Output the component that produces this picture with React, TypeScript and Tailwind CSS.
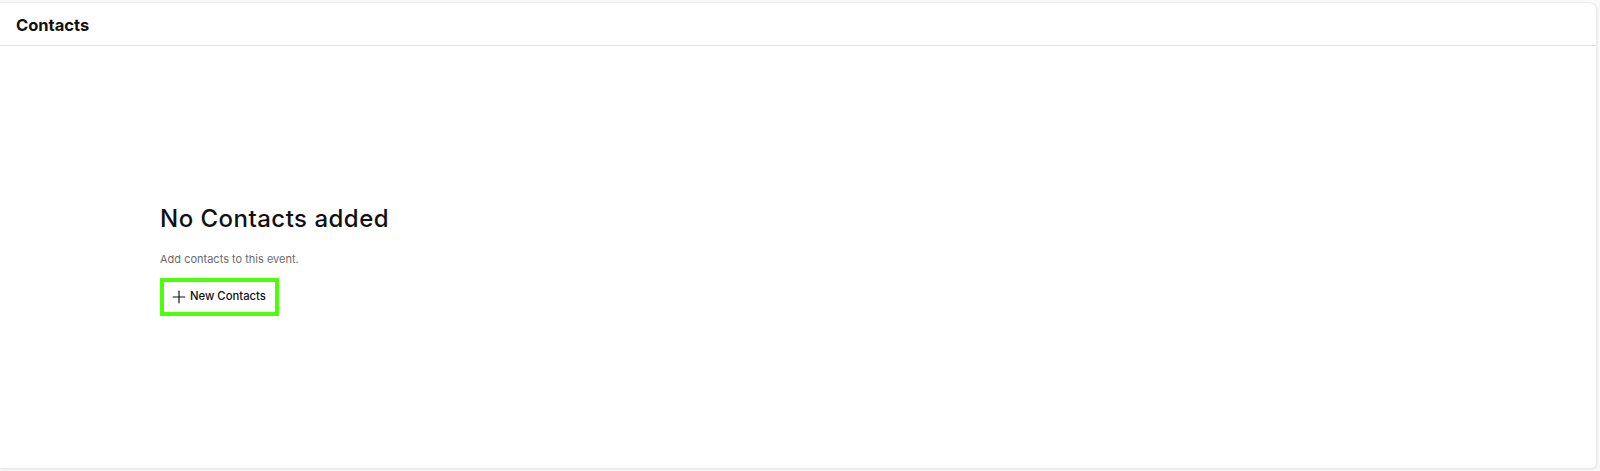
import React from "react"
import { Plus } from "lucide-react"

export default function App() {
    return (
        <div className="w-[1600px] h-[471px] bg-[#fafafa] pt-[2px] pr-[3px] pb-[2px] font-['Inter',sans-serif]">
            <div className="h-full flex flex-col bg-white rounded-tr-lg rounded-br-md border-r border-b border-t border-[#ececec] shadow-[1px_1px_2px_rgba(0,0,0,0.06)]">
                {/* Header */}
                <div className="h-[43px] flex items-center px-4 pt-[3px] border-b border-[#e2e2e2]">
                    <h2 className="text-[16.5px] font-bold text-[#111111]">Contacts</h2>
                </div>

                {/* Empty state */}
                <div className="flex-1 flex flex-col justify-center px-40 pt-[4px]">
                    <h1 className="text-2xl leading-8 font-medium tracking-[0.02em] text-[#111111]">No Contacts added</h1>
                    <p className="mt-4 text-[11px] leading-4 text-[#6b6b6b]">Add contacts to this event.</p>
                    <div className="mt-[11px]">
                        <button className="h-[38px] inline-flex items-center gap-0 pl-[5px] pr-[9px] border-4 border-[#4cff0a] text-[11.3px] font-medium text-[#111111] bg-white">
                            <Plus className="w-5 h-5" strokeWidth={1.4} />
                            <span className="ml-[1px]">New Contacts</span>
                        </button>
                    </div>
                </div>
            </div>
        </div>
    )
}
